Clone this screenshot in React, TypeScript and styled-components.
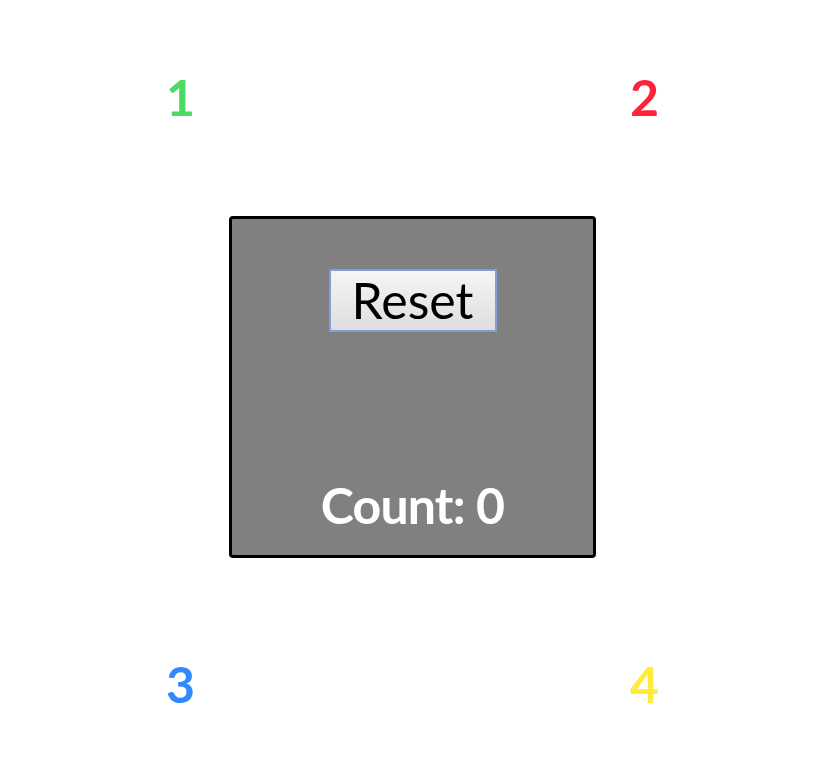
import React from 'react';
import styled, { createGlobalStyle } from 'styled-components';

const GlobalStyle = createGlobalStyle`
  html, body {
    margin: 0;
    padding: 0;
    background: #ffffff;
  }
  body {
    font-family: 'Lato', 'Noto Sans', sans-serif;
  }
`;

const Page = styled.div`
  box-sizing: border-box;
  height: 100vh;
  padding: 67px 0 63px;
  display: flex;
  flex-direction: column;
  align-items: center;
`;

const CornerRow = styled.div`
  display: flex;
  gap: 404px;
`;

const Corner = styled.div<{ $color: string }>`
  width: 60px;
  text-align: center;
  font-size: 50px;
  line-height: 60px;
  font-weight: 700;
  color: ${p => p.$color};
`;

const CounterBox = styled.div`
  box-sizing: border-box;
  width: 367px;
  height: 342px;
  margin: 89px 0 96px;
  padding: 50px 0 20px;
  background: #808080;
  border: 3px solid #000000;
  border-radius: 4px;
  display: flex;
  flex-direction: column;
  align-items: center;
  justify-content: space-between;
`;

const ResetButton = styled.button`
  box-sizing: border-box;
  width: 168px;
  height: 63px;
  font-family: 'Lato', 'Noto Sans', sans-serif;
  font-size: 50px;
  line-height: 59px;
  padding: 0;
  color: #000000;
  background: linear-gradient(#f5f5f5, #dedede);
  border: 2px solid #7f9fd6;
  border-radius: 0;
  outline: none;
  cursor: pointer;
`;

const CountLabel = styled.div`
  font-size: 50px;
  line-height: 60px;
  font-weight: 700;
  letter-spacing: -0.8px;
  color: #ffffff;
`;

const App: React.FC = () => {
  const [count, setCount] = React.useState(0);

  return (
    <>
      <GlobalStyle />
      <Page>
        <CornerRow>
          <Corner $color="#4cd964">1</Corner>
          <Corner $color="#ff2238">2</Corner>
        </CornerRow>
        <CounterBox onClick={() => setCount(c => c + 1)}>
          <ResetButton
            onClick={e => {
              e.stopPropagation();
              setCount(0);
            }}
          >
            Reset
          </ResetButton>
          <CountLabel>Count: {count}</CountLabel>
        </CounterBox>
        <CornerRow>
          <Corner $color="#3288fd">3</Corner>
          <Corner $color="#ffeb3b">4</Corner>
        </CornerRow>
      </Page>
    </>
  );
};

export default App;
